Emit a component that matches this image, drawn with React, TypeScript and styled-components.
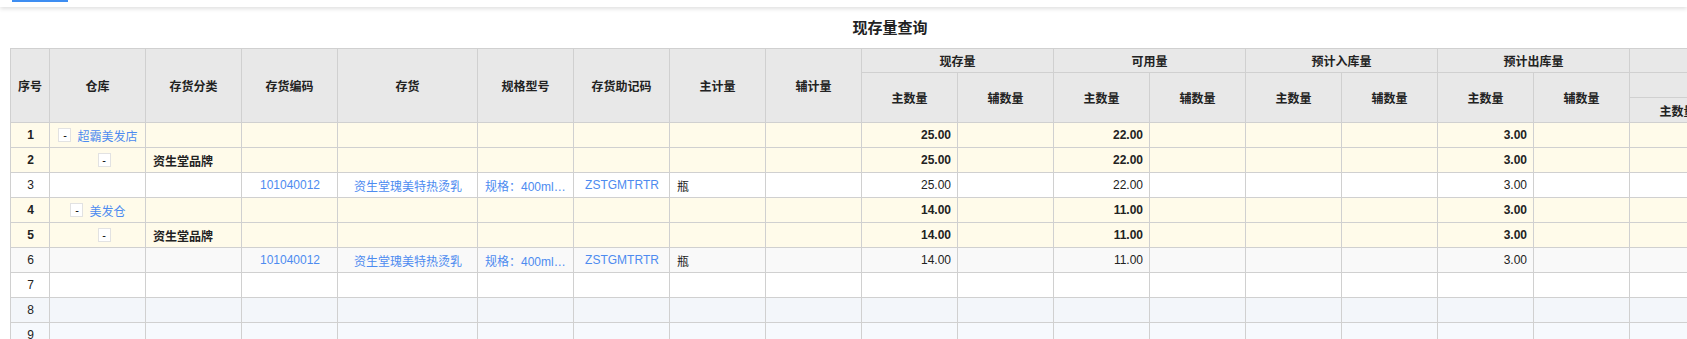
import React from 'react';
import styled, { createGlobalStyle } from 'styled-components';

const GlobalStyle = createGlobalStyle`
  html, body {
    margin: 0;
    padding: 0;
    background: #fff;
    overflow: hidden;
  }
  body {
    font-family: "Liberation Sans", "Noto Sans CJK SC", sans-serif;
    font-size: 12px;
    color: #333;
  }
`;

const TopBar = styled.div`
  display: flex;
  align-items: flex-start;
  height: 7px;
  padding-left: 12px;
  background: #fff;
  box-shadow: 0 2px 4px rgba(0, 0, 0, 0.12);
`;

const TabIndicator = styled.div`
  width: 56px;
  height: 2px;
  background: #3e8ef2;
`;

const Report = styled.div`
  width: 1760px;
  padding-left: 10px;
`;

const Title = styled.h1`
  margin: 0;
  height: 41px;
  line-height: 41px;
  text-align: center;
  font-size: 15px;
  font-weight: bold;
  color: #222;
`;

const Grid = styled.table<{ $w: number }>`
  border-collapse: collapse;
  table-layout: fixed;
  width: ${(p) => p.$w}px;
`;

const HeadRow = styled.tr<{ $h: number }>`
  height: ${(p) => p.$h}px;
`;

const HeadCell = styled.th`
  background: #e8e8e8;
  border: 1px solid #d0d0d0;
  padding: 0;
  font-size: 12px;
  font-weight: bold;
  color: #222;
  text-align: center;
  vertical-align: middle;
  white-space: nowrap;
  overflow: hidden;
`;

const BodyRow = styled.tr<{ $bg: string }>`
  height: 25px;
  background: ${(p) => p.$bg};
`;

const Cell = styled.td<{ $align?: 'left' | 'center' | 'right'; $bold?: boolean; $link?: boolean }>`
  border: 1px solid #d0d0d0;
  padding: 0 6px 0 7px;
  text-align: ${(p) => p.$align || 'center'};
  font-weight: ${(p) => (p.$bold ? 'bold' : 'normal')};
  color: ${(p) => (p.$link ? '#4d8bf0' : '#222')};
  white-space: nowrap;
  overflow: hidden;
  text-overflow: ellipsis;
  vertical-align: middle;
`;

const TreeWrap = styled.div<{ $indent: number }>`
  display: flex;
  align-items: center;
  justify-content: center;
  gap: 6px;
  padding-left: ${(p) => p.$indent}px;
`;

const Toggle = styled.span`
  display: inline-flex;
  align-items: center;
  justify-content: center;
  width: 11px;
  height: 12px;
  border: 1px solid #e2e2e2;
  background: #fff;
  color: #000;
  font-size: 11px;
  line-height: 1;
`;

const TreeLabel = styled.span`
  color: #4d8bf0;
`;

type Row = {
  bg: string;
  group?: boolean;
  tree?: { label?: string; indent: number };
  category?: string;
  code?: string;
  name?: string;
  spec?: string;
  mnemonic?: string;
  unit?: string;
  onHand?: string;
  available?: string;
  outgoing?: string;
};

const YELLOW = '#fffbea';
const SPEC = '规格：400ml（瓶装）';

const rows: Row[] = [
  { bg: YELLOW, group: true, tree: { label: '超霸美发店', indent: 0 }, onHand: '25.00', available: '22.00', outgoing: '3.00' },
  { bg: YELLOW, group: true, tree: { indent: 12 }, category: '资生堂品牌', onHand: '25.00', available: '22.00', outgoing: '3.00' },
  {
    bg: '#ffffff',
    code: '101040012',
    name: '资生堂瑰美特热烫乳',
    spec: SPEC,
    mnemonic: 'ZSTGMTRTR',
    unit: '瓶',
    onHand: '25.00',
    available: '22.00',
    outgoing: '3.00',
  },
  { bg: YELLOW, group: true, tree: { label: '美发仓', indent: 0 }, onHand: '14.00', available: '11.00', outgoing: '3.00' },
  { bg: YELLOW, group: true, tree: { indent: 12 }, category: '资生堂品牌', onHand: '14.00', available: '11.00', outgoing: '3.00' },
  {
    bg: '#f9f9f9',
    code: '101040012',
    name: '资生堂瑰美特热烫乳',
    spec: SPEC,
    mnemonic: 'ZSTGMTRTR',
    unit: '瓶',
    onHand: '14.00',
    available: '11.00',
    outgoing: '3.00',
  },
  { bg: '#ffffff' },
  { bg: '#f3f6fa' },
  { bg: '#f6f9fd' },
];

// 序号, 仓库, 存货分类, 存货编码, 存货, 规格型号, 存货助记码, 主计量, 辅计量, then 12 quantity columns
const colWidths = [39, 96, 96, 96, 140, 96, 96, 96, 96, 96, 96, 96, 96, 96, 96, 96, 96, 96, 96, 96, 96];
const tableWidth = colWidths.reduce((a, b) => a + b, 0);

const plainHeads = ['仓库', '存货分类', '存货编码', '存货', '规格型号', '存货助记码', '主计量', '辅计量'];
const qtyGroups = ['现存量', '可用量', '预计入库量', '预计出库量'];

const StockQuery = () => {
  return (
    <Report>
      <Title>现存量查询</Title>
      <Grid $w={tableWidth}>
        <colgroup>
          {colWidths.map((w, i) => (
            <col key={i} style={{ width: w }} />
          ))}
        </colgroup>
        <thead>
          <HeadRow $h={24}>
            <HeadCell rowSpan={3}>序号</HeadCell>
            {plainHeads.map((h) => (
              <HeadCell key={h} rowSpan={3}>{h}</HeadCell>
            ))}
            {qtyGroups.map((g) => (
              <HeadCell key={g} colSpan={2}>{g}</HeadCell>
            ))}
            <HeadCell colSpan={4}>预计可用量</HeadCell>
          </HeadRow>
          <HeadRow $h={25}>
            {qtyGroups.map((g) => (
              <React.Fragment key={g}>
                <HeadCell rowSpan={2}>主数量</HeadCell>
                <HeadCell rowSpan={2}>辅数量</HeadCell>
              </React.Fragment>
            ))}
            <HeadCell colSpan={2}>含预计入库</HeadCell>
            <HeadCell colSpan={2}>不含预计入库</HeadCell>
          </HeadRow>
          <HeadRow $h={25}>
            <HeadCell>主数量</HeadCell>
            <HeadCell>辅数量</HeadCell>
            <HeadCell>主数量</HeadCell>
            <HeadCell>辅数量</HeadCell>
          </HeadRow>
        </thead>
        <tbody>
          {rows.map((r, i) => (
            <BodyRow key={i} $bg={r.bg}>
              <Cell $bold={r.group}>{i + 1}</Cell>
              <Cell>
                {r.tree && (
                  <TreeWrap $indent={r.tree.indent}>
                    <Toggle>-</Toggle>
                    {r.tree.label && <TreeLabel>{r.tree.label}</TreeLabel>}
                  </TreeWrap>
                )}
              </Cell>
              <Cell $align="left" $bold>{r.category}</Cell>
              <Cell $link>{r.code}</Cell>
              <Cell $link>{r.name}</Cell>
              <Cell $align="left" $link>{r.spec}</Cell>
              <Cell $link>{r.mnemonic}</Cell>
              <Cell $align="left">{r.unit}</Cell>
              <Cell />
              <Cell $align="right" $bold={r.group}>{r.onHand}</Cell>
              <Cell />
              <Cell $align="right" $bold={r.group}>{r.available}</Cell>
              <Cell />
              <Cell />
              <Cell />
              <Cell $align="right" $bold={r.group}>{r.outgoing}</Cell>
              <Cell />
              <Cell />
              <Cell />
              <Cell />
              <Cell />
            </BodyRow>
          ))}
        </tbody>
      </Grid>
    </Report>
  );
};

export default function App() {
  return (
    <>
      <GlobalStyle />
      <TopBar>
        <TabIndicator />
      </TopBar>
      <StockQuery />
    </>
  );
}
